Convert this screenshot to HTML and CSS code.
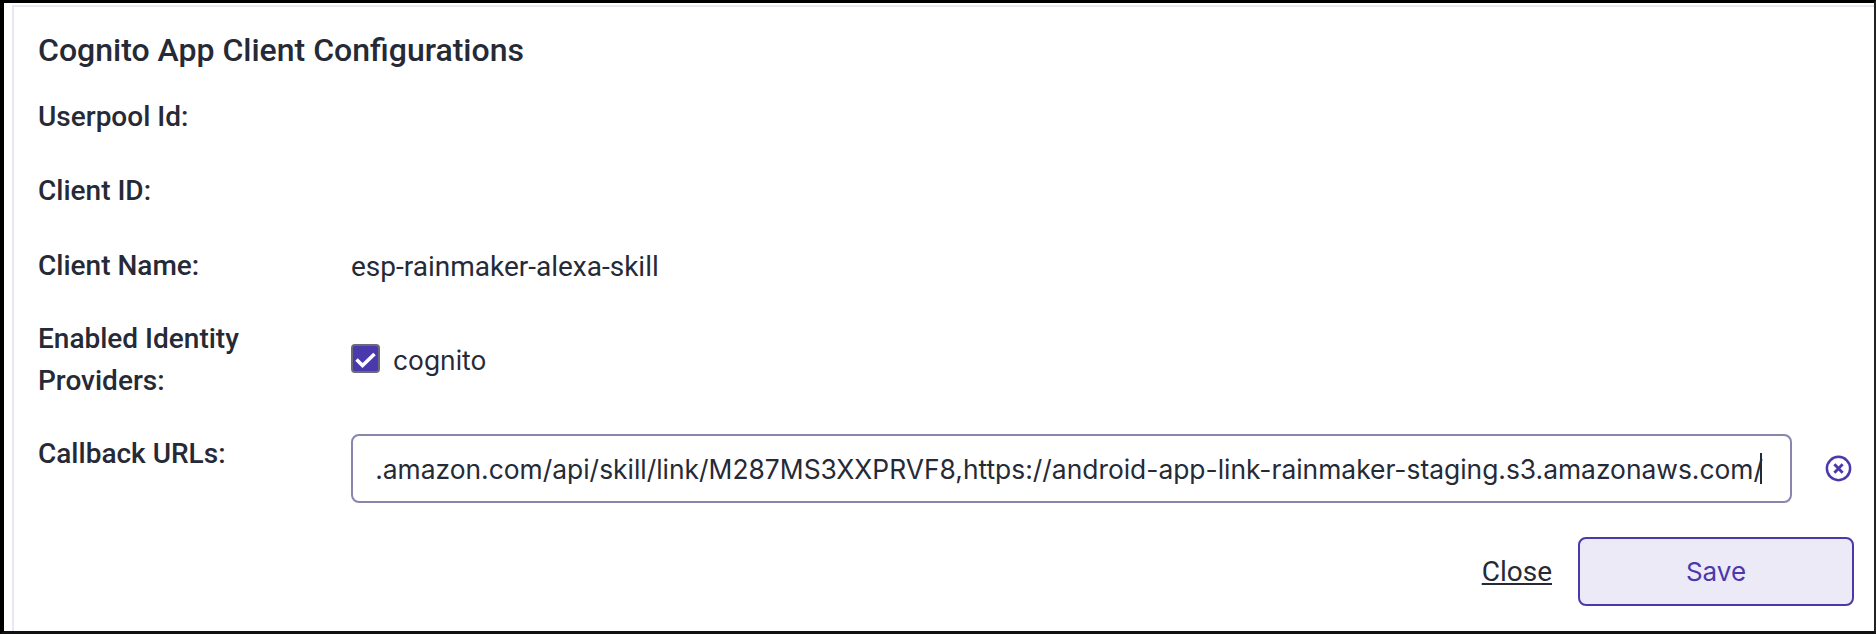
FILE: index.html
```html
<!DOCTYPE html>
<html lang="en">
<head>
    <meta charset="UTF-8">
    <title>Cognito App Client Configurations</title>
    <link rel="stylesheet" href="styles.css">
</head>
<body>

    <div class="frame">
        <div class="card">
            <h1>Cognito App Client Configurations</h1>

            <div class="row row-userpool">
                <div class="label">Userpool Id:</div>
            </div>
            <div class="row row-client">
                <div class="label">Client ID:</div>
            </div>
            <div class="row row-name">
                <div class="label">Client Name:</div>
                <div class="value">esp-rainmaker-alexa-skill</div>
            </div>
            <div class="row row-providers">
                <div class="label">Enabled Identity Providers:</div>
                <div class="check-item">
                    <span class="checkbox">
                        <svg viewBox="0 0 25 25" width="25" height="25"><path d="M3.5 13.5l6 6L21.5 8" fill="none" stroke="#fff" stroke-width="3.6"/></svg>
                    </span>
                    <span class="check-text">cognito</span>
                </div>
            </div>
            <div class="row row-callback">
                <div class="label">Callback URLs:</div>
                <div class="url-box">
                    <span class="url-text">.amazon.com/api/skill/link/M287MS3XXPRVF8,https://android-app-link-rainmaker-staging.s3.amazonaws.com/</span><span class="caret"></span>
                </div>
                <svg class="clear-icon" viewBox="0 0 26 26" width="27" height="27">
                    <circle cx="13" cy="13" r="11.2" fill="none" stroke="#4a38ad" stroke-width="2.4"/>
                    <path d="M9 9l8 8M17 9l-8 8" fill="none" stroke="#4a38ad" stroke-width="2.8"/>
                </svg>
            </div>

            <div class="actions">
                <a class="close-link" href="#">Close</a>
                <button class="save-btn" type="button">Save</button>
            </div>
        </div>
    </div>

</body>
</html>
```

FILE: styles.css
```css
body {
    margin: 0;
    background-color: #fff;
    font-family: Inter, "Liberation Sans", sans-serif;
    color: #262a36;
}

.frame {
    height: 634px;
    box-sizing: border-box;
    border-top: 3px solid #000;
    border-left: 4px solid #000;
    border-right: 2px solid #222;
    border-bottom: 3px solid #111;
    padding: 2px 0 0 8px;
}

.card {
    height: 100%;
    box-sizing: border-box;
    border-top: 2px solid #e6e9f5;
    border-left: 2px solid #e6e9f5;
    padding: 0 20px 0 24px;
}

h1 {
    margin: 0;
    padding-top: 22px;
    height: 43px;
    font-family: Roboto, sans-serif;
    font-size: 32px;
    line-height: 43px;
    font-weight: 500;
}

.row {
    display: flex;
    align-items: center;
}

.row-userpool {
    margin-top: 25px;
    height: 40px;
}

.row-client {
    margin-top: 34px;
    height: 40px;
}

.row-name {
    margin-top: 35px;
    height: 40px;
}

.row-providers {
    margin-top: 32px;
    height: 84px;
}

.row-callback {
    margin-top: 32px;
    height: 69px;
}

.row-callback .label {
    align-self: flex-start;
    margin-top: -1px;
}

.label {
    width: 313px;
    flex-shrink: 0;
    font-family: Roboto, sans-serif;
    font-size: 28px;
    line-height: 42px;
    font-weight: 500;
}

.row-providers .label {
    width: 260px;
    margin-right: 53px;
}

.value {
    font-family: Roboto, sans-serif;
    font-size: 28px;
}

.check-item {
    display: flex;
    align-items: center;
}

.checkbox {
    width: 29px;
    height: 29px;
    margin-bottom: 3px;
    box-sizing: border-box;
    border: 2px solid #6b6b78;
    border-radius: 4px;
    background-color: #4a38ad;
    display: flex;
    align-items: center;
    justify-content: center;
}

.check-text {
    margin-left: 13px;
    font-size: 26.4px;
}

.url-box {
    width: 1441px;
    height: 69px;
    box-sizing: border-box;
    border: 2px solid #8886ae;
    border-radius: 8px;
    padding: 0 28px 0 22px;
    display: flex;
    align-items: center;
    justify-content: flex-end;
    overflow: hidden;
    white-space: nowrap;
    font-size: 26.4px;
}

.caret {
    display: inline-block;
    flex-shrink: 0;
    width: 2px;
    height: 31px;
    margin-left: -3px;
    background-color: #262a36;
}

.clear-icon {
    margin-left: 33px;
}

.actions {
    margin-top: 34px;
    display: flex;
    align-items: center;
    justify-content: flex-end;
}

.close-link {
    color: #262a36;
    font-family: Roboto, sans-serif;
    font-size: 28px;
    margin-right: 26px;
}

.save-btn {
    width: 276px;
    height: 69px;
    border: 2px solid #4a38ad;
    border-radius: 8px;
    background-color: #eceaf7;
    color: #4a38ad;
    font-family: Inter, sans-serif;
    font-size: 26px;
}
```
